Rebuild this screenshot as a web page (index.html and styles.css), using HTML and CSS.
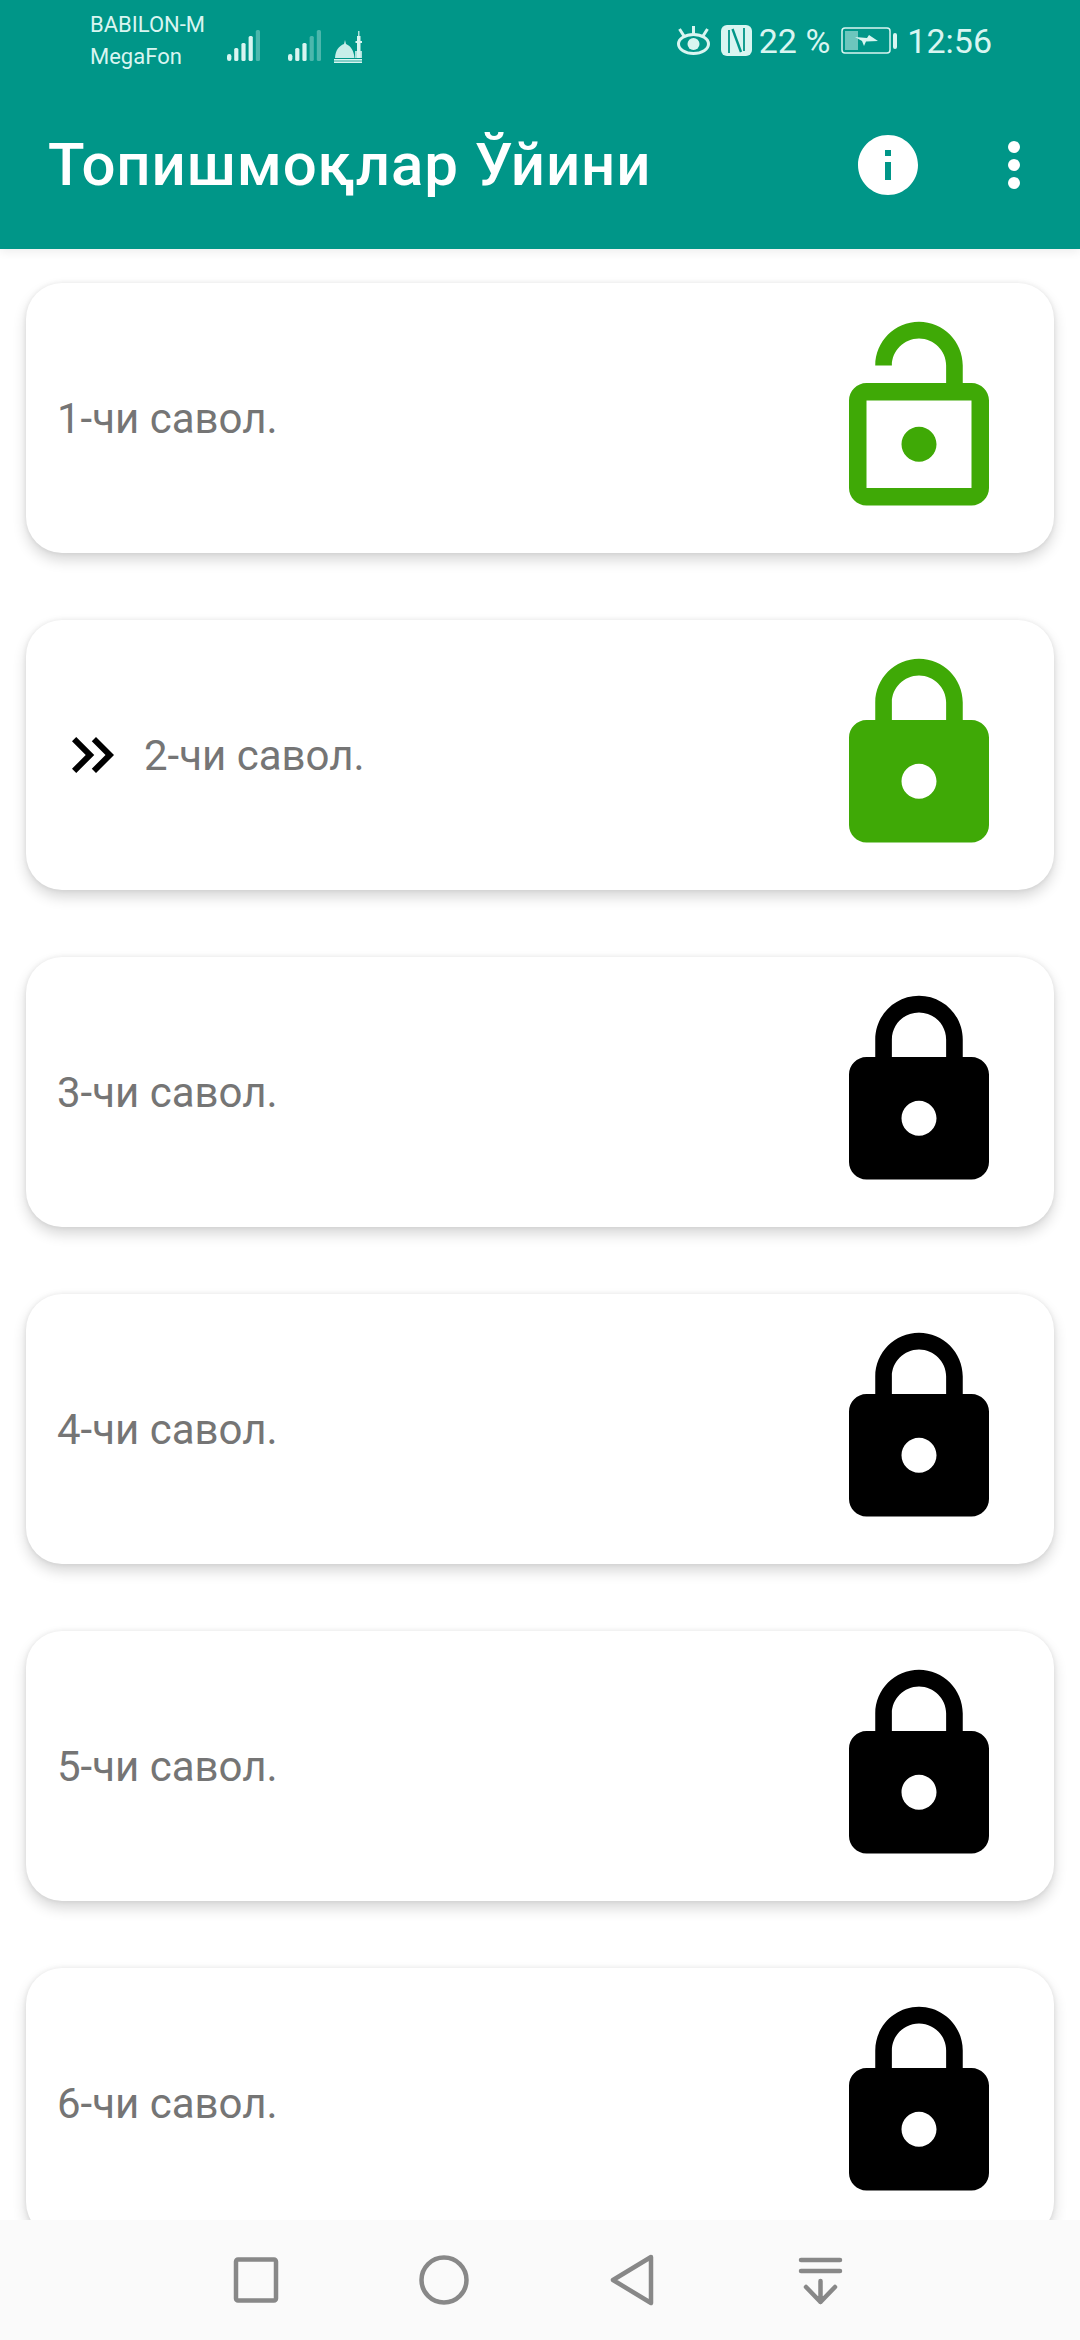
FILE: index.html
```html
<!DOCTYPE html>
<html lang="uz">
<head>
<meta charset="utf-8">
<title>Топишмоқлар Ўйини</title>
<link rel="stylesheet" href="styles.css">
</head>
<body>
<div class="screen">
  <header class="appbar">
    <div class="status">
      <div class="carrier"><span>BABILON-M</span><span>MegaFon</span></div>
      <svg class="sig sig-a" width="33" height="31" viewBox="0 0 33 31"><rect x="0" y="24" width="4.400" height="7" rx="2.200" fill="currentColor"/><rect x="7.200" y="18" width="4.200" height="13" rx="1.500" fill="currentColor"/><rect x="14.400" y="13" width="4.200" height="18" rx="1.500" fill="currentColor"/><rect x="21.600" y="6" width="4.200" height="25" rx="1.500" fill="currentColor"/><rect x="28.800" y="0" width="4.200" height="31" rx="1.500" fill="currentColor" opacity=".35"/></svg>
      <svg class="sig sig-b" width="33" height="31" viewBox="0 0 33 31"><rect x="0" y="24" width="4.400" height="7" rx="2.200" fill="currentColor"/><rect x="7.200" y="18" width="4.200" height="13" rx="1.500" fill="currentColor"/><rect x="14.400" y="13" width="4.200" height="18" rx="1.500" fill="currentColor"/><rect x="21.600" y="6" width="4.200" height="25" rx="1.500" fill="currentColor" opacity=".35"/><rect x="28.800" y="0" width="4.200" height="31" rx="1.500" fill="currentColor" opacity=".35"/></svg>
      <svg class="mosque" width="28" height="32" viewBox="0 0 28 32"><path d="M1 27 C1.500 19 5 15 10 13 L11 9 L12 13 C17 15 20 20 20.500 27 Z" fill="currentColor" opacity=".92"/><rect x="23" y="5" width="3.500" height="22" fill="currentColor"/><rect x="24.200" y="0" width="1.200" height="6" fill="currentColor"/><rect x="21.500" y="10" width="6.500" height="2" fill="currentColor"/><rect x="21" y="20" width="7" height="7" fill="currentColor" opacity=".8"/><rect x="0" y="28" width="28" height="1.600" fill="currentColor"/><rect x="0" y="30.400" width="28" height="1.600" fill="currentColor"/></svg>
      <div class="status-right">
        <svg class="eye" width="35" height="30" viewBox="0 0 35 30"><ellipse cx="17.500" cy="18" rx="15" ry="9.500" fill="none" stroke="currentColor" stroke-width="3"/><circle cx="17.500" cy="18" r="6" fill="currentColor"/><path d="M17.500 8 V0 M8 10 L3.500 3 M27 10 L31.500 3" stroke="currentColor" stroke-width="3" fill="none"/></svg>
        <svg class="nfc" width="31" height="31" viewBox="0 0 31 31"><rect width="31" height="31" rx="6" fill="currentColor"/><path d="M8 5 V28 M23 3 V26" stroke="#009688" stroke-width="1.800" fill="none"/><path d="M11.500 4 L20 27" stroke="#009688" stroke-width="2.400" fill="none"/></svg>
        <span class="pct">22 %</span>
        <svg class="batt" width="56" height="27" viewBox="0 0 56 27"><rect x="1" y="1" width="48" height="25" rx="3" fill="none" stroke="currentColor" stroke-width="1.500"/><rect x="4" y="4" width="13" height="19" fill="currentColor" opacity=".5"/><path d="M14 10 L26 11 L28 8 L37 14 L25 14.500 L23 19 L21 14 Z" fill="currentColor"/><rect x="52" y="6" width="4" height="16" rx="2" fill="currentColor"/></svg>
        <span class="time">12:56</span>
      </div>
    </div>
    <div class="toolbar">
      <h1 class="title">Топишмоқлар Ўйини</h1>
      <svg class="action" width="72" height="72" viewBox="0 0 24 24"><path fill="#fff" d="M12 2C6.480 2 2 6.480 2 12s4.480 10 10 10 10-4.480 10-10S17.520 2 12 2zm1 15h-2v-6h2v6zm0-8h-2V7h2v2z"/></svg>
      <svg class="action" width="72" height="72" viewBox="0 0 24 24"><circle cx="12" cy="6" r="2" fill="#fff"/><circle cx="12" cy="12" r="2" fill="#fff"/><circle cx="12" cy="18" r="2" fill="#fff"/></svg>
    </div>
  </header>

  <main class="list">
    <div class="card">
      <span class="label">1-чи савол.</span>
      <svg class="lock green" width="210" height="210" viewBox="0 0 24 24"><path d="M12 17c1.100 0 2-.9 2-2s-.9-2-2-2-2 .9-2 2 .9 2 2 2zm6-9h-1V6c0-2.760-2.240-5-5-5S7 3.240 7 6h1.900c0-1.710 1.390-3.100 3.100-3.100 1.710 0 3.100 1.390 3.100 3.100v2H6c-1.100 0-2 .9-2 2v10c0 1.100.9 2 2 2h12c1.100 0 2-.9 2-2V10c0-1.100-.9-2-2-2zm0 12H6V10h12v10z"/></svg>
    </div>
    <div class="card">
      <svg class="chev" width="72" height="72" viewBox="0 0 24 24"><path d="M6.410 6L5 7.410 9.580 12 5 16.590 6.410 18l6-6z"/><path d="M13 6l-1.410 1.410L16.170 12l-4.580 4.590L13 18l6-6z"/></svg>
      <span class="label">2-чи савол.</span>
      <svg class="lock green" width="210" height="210" viewBox="0 0 24 24"><path d="M18 8h-1V6c0-2.760-2.240-5-5-5S7 3.240 7 6v2H6c-1.100 0-2 .9-2 2v10c0 1.100.9 2 2 2h12c1.100 0 2-.9 2-2V10c0-1.100-.9-2-2-2zm-6 9c-1.100 0-2-.9-2-2s.9-2 2-2 2 .9 2 2-.9 2-2 2zm3.100-9H8.900V6c0-1.710 1.390-3.100 3.100-3.100 1.710 0 3.100 1.390 3.100 3.100v2z"/></svg>
    </div>
    <div class="card">
      <span class="label">3-чи савол.</span>
      <svg class="lock" width="210" height="210" viewBox="0 0 24 24"><path d="M18 8h-1V6c0-2.760-2.240-5-5-5S7 3.240 7 6v2H6c-1.100 0-2 .9-2 2v10c0 1.100.9 2 2 2h12c1.100 0 2-.9 2-2V10c0-1.100-.9-2-2-2zm-6 9c-1.100 0-2-.9-2-2s.9-2 2-2 2 .9 2 2-.9 2-2 2zm3.100-9H8.900V6c0-1.710 1.390-3.100 3.100-3.100 1.710 0 3.100 1.390 3.100 3.100v2z"/></svg>
    </div>
    <div class="card">
      <span class="label">4-чи савол.</span>
      <svg class="lock" width="210" height="210" viewBox="0 0 24 24"><path d="M18 8h-1V6c0-2.760-2.240-5-5-5S7 3.240 7 6v2H6c-1.100 0-2 .9-2 2v10c0 1.100.9 2 2 2h12c1.100 0 2-.9 2-2V10c0-1.100-.9-2-2-2zm-6 9c-1.100 0-2-.9-2-2s.9-2 2-2 2 .9 2 2-.9 2-2 2zm3.100-9H8.900V6c0-1.710 1.390-3.100 3.100-3.100 1.710 0 3.100 1.390 3.100 3.100v2z"/></svg>
    </div>
    <div class="card">
      <span class="label">5-чи савол.</span>
      <svg class="lock" width="210" height="210" viewBox="0 0 24 24"><path d="M18 8h-1V6c0-2.760-2.240-5-5-5S7 3.240 7 6v2H6c-1.100 0-2 .9-2 2v10c0 1.100.9 2 2 2h12c1.100 0 2-.9 2-2V10c0-1.100-.9-2-2-2zm-6 9c-1.100 0-2-.9-2-2s.9-2 2-2 2 .9 2 2-.9 2-2 2zm3.100-9H8.900V6c0-1.710 1.390-3.100 3.100-3.100 1.710 0 3.100 1.390 3.100 3.100v2z"/></svg>
    </div>
    <div class="card">
      <span class="label">6-чи савол.</span>
      <svg class="lock" width="210" height="210" viewBox="0 0 24 24"><path d="M18 8h-1V6c0-2.760-2.240-5-5-5S7 3.240 7 6v2H6c-1.100 0-2 .9-2 2v10c0 1.100.9 2 2 2h12c1.100 0 2-.9 2-2V10c0-1.100-.9-2-2-2zm-6 9c-1.100 0-2-.9-2-2s.9-2 2-2 2 .9 2 2-.9 2-2 2zm3.100-9H8.900V6c0-1.710 1.390-3.100 3.100-3.100 1.710 0 3.100 1.390 3.100 3.100v2z"/></svg>
    </div>
  </main>

  <nav class="navbar">
    <svg width="60" height="60" viewBox="0 0 60 60"><rect x="10" y="9.500" width="40" height="41" rx="2" class="nav-shape"/></svg>
    <svg width="60" height="60" viewBox="0 0 60 60"><circle cx="30" cy="30" r="22.500" class="nav-shape"/></svg>
    <svg width="60" height="60" viewBox="0 0 60 60"><path d="M49 7 L11 30 L49 53 Z" class="nav-shape"/></svg>
    <svg width="60" height="60" viewBox="0 0 60 60"><path d="M11 10 H50 M11 21 H50 M30.500 31 V52 M16 37 L30.500 52 L45 37" class="nav-shape"/></svg>
  </nav>
</div>
</body>
</html>
```
FILE: styles.css
```css
* { box-sizing: border-box; }
html, body { margin: 0; padding: 0; }
body { background: #fff; font-family: Roboto, "Noto Sans", sans-serif; }

.screen {
  width: 1080px;
  height: 2340px;
  display: flex;
  flex-direction: column;
  overflow: hidden;
  background: #fff;
}

.appbar {
  flex: none;
  height: 249px;
  background: #009688;
  color: #d9f5f1;
  position: relative;
  z-index: 2;
  box-shadow: 0 3px 9px rgba(0, 0, 0, .07);
}

.status {
  height: 81px;
  display: flex;
  align-items: center;
  padding: 0 88px 0 90px;
}
.carrier {
  display: flex;
  flex-direction: column;
  flex: none;
  width: 116px;
  font-size: 22px;
  line-height: 32px;
  white-space: nowrap;
  margin-right: 21px;
}
.sig { margin-top: 9px; flex: none; }
.sig-a { margin-right: 28px; }
.sig-b { margin-right: 13px; }
.mosque { margin-top: 12px; flex: none; }

.status-right {
  margin-left: auto;
  display: flex;
  align-items: center;
  font-size: 34px;
  line-height: 40px;
}
.eye { margin-right: 10px; }
.nfc { margin-right: 7px; }
.pct { margin-right: 11px; }
.batt { margin-right: 10px; }

.toolbar {
  height: 168px;
  display: flex;
  align-items: center;
  padding: 0 30px 0 48px;
}
.title {
  flex: 1;
  margin: 0;
  color: #fff;
  font-size: 60px;
  font-weight: 500;
  line-height: 72px;
  letter-spacing: .9px;
}
.action { flex: none; }
.action + .action { margin-left: 54px; }

.list {
  flex: 1;
  min-height: 0;
  overflow: hidden;
  padding: 34px 26px 0;
  display: flex;
  flex-direction: column;
  gap: 67px;
}
.card {
  flex: none;
  height: 270px;
  background: #fff;
  border-radius: 36px;
  display: flex;
  align-items: center;
  padding: 0 30px 0 31px;
  box-shadow: 0 7px 14px rgba(0, 0, 0, .16), 0 0 5px rgba(0, 0, 0, .08);
}
.label {
  flex: 1;
  color: #757575;
  font-size: 42px;
  line-height: 50px;
  padding-top: 2px;
}
.chev { flex: none; margin-right: 15px; }
.lock { flex: none; fill: #000; }
.lock.green { fill: #3fa906; }

.navbar {
  flex: none;
  height: 120px;
  background: #fafafa;
  display: flex;
  align-items: center;
  justify-content: center;
  gap: 128px;
  padding-right: 4px;
  position: relative;
  z-index: 2;
}
.nav-shape {
  fill: none;
  stroke: #888;
  stroke-width: 4.500;
  stroke-linecap: round;
  stroke-linejoin: round;
}
```
